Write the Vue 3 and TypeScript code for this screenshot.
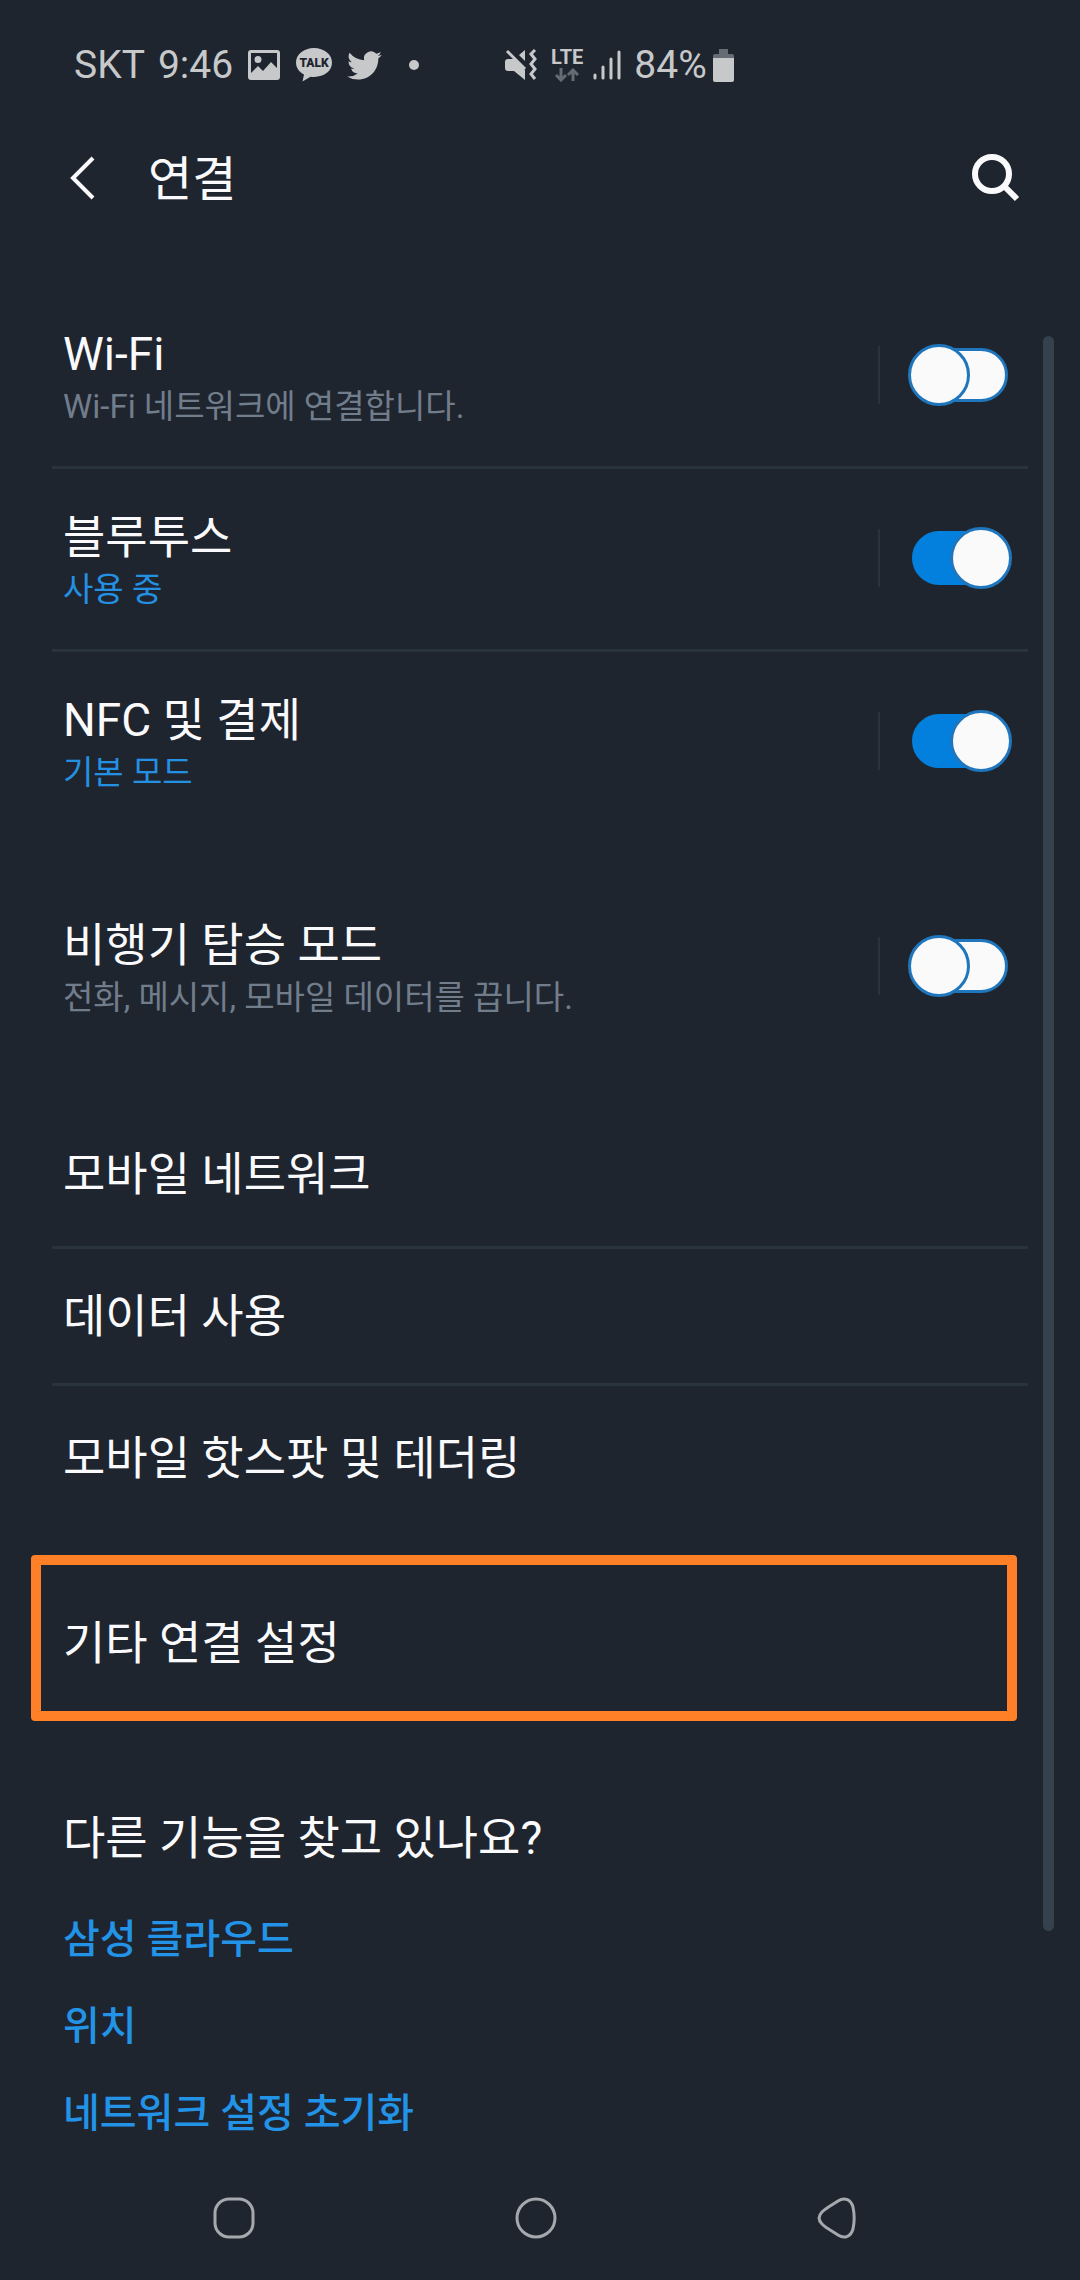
<script setup lang="ts">
import { reactive } from 'vue'

interface ToggleItem {
  id: string
  title: string
  detail: string
  on: boolean
  accent: boolean
}

const toggleGroups = reactive<ToggleItem[][]>([
  [
    { id: 'wifi', title: 'Wi-Fi', detail: 'Wi-Fi 네트워크에 연결합니다.', on: false, accent: false },
    { id: 'bluetooth', title: '블루투스', detail: '사용 중', on: true, accent: true },
    { id: 'nfc', title: 'NFC 및 결제', detail: '기본 모드', on: true, accent: true },
  ],
  [
    { id: 'airplane', title: '비행기 탑승 모드', detail: '전화, 메시지, 모바일 데이터를 끕니다.', on: false, accent: false },
  ],
])

const networkItems: string[] = ['모바일 네트워크', '데이터 사용', '모바일 핫스팟 및 테더링']
const relatedLinks: string[] = ['삼성 클라우드', '위치', '네트워크 설정 초기화']
</script>

<template>
  <div class="screen" lang="ko">
    <div class="status">
      <span class="carrier">SKT</span>
      <span class="clock">9:46</span>
      <svg class="picture" width="32" height="30" viewBox="0 0 32 30" aria-hidden="true">
        <path fill="currentColor" fill-rule="evenodd" d="M3 0H29a3 3 0 0 1 3 3V27a3 3 0 0 1-3 3H3a3 3 0 0 1-3-3V3a3 3 0 0 1 3-3ZM3 3V23L10 16L15 21L23 12L29 18V3ZM10 6a3 3 0 1 1 0 7a3 3 0 1 1 0-7Z" />
      </svg>
      <svg class="talk" width="36" height="34" viewBox="0 0 36 34" aria-hidden="true">
        <path fill="currentColor" d="M18 0C8 0 0 6.400 0 14.500C0 19.500 3 24 8 26.500L6.500 33.500L14.500 28.700C27 30.200 36 23.500 36 14.500C36 6.400 28 0 18 0Z" />
        <text x="18" y="19" text-anchor="middle" class="talk-text">TALK</text>
      </svg>
      <svg class="bird" width="35" height="29" viewBox="0 2 24 20" aria-hidden="true">
        <path fill="currentColor" d="M24 4.600a10 10 0 0 1-2.800.8 4.900 4.900 0 0 0 2.100-2.700 9.900 9.900 0 0 1-3.100 1.200 4.900 4.900 0 0 0-8.400 4.500A14 14 0 0 1 1.700 3.200a4.900 4.900 0 0 0 1.500 6.500 4.900 4.900 0 0 1-2.200-.6v.1a4.900 4.900 0 0 0 3.900 4.800 5 5 0 0 1-2.200.1 4.900 4.900 0 0 0 4.600 3.400A9.900 9.900 0 0 1 0 19.500a14 14 0 0 0 7.500 2.200c9.100 0 14-7.500 14-14v-.6A10 10 0 0 0 24 4.600Z" />
      </svg>
      <span class="dot"></span>
      <svg class="mute" width="32" height="32" viewBox="0 0 32 32" aria-hidden="true">
        <path fill="currentColor" d="M3 10H9L20 21V31L9 22H3a3 3 0 0 1-3-3V13a3 3 0 0 1 3-3ZM14 6L20 1V12Z" />
        <path fill="none" stroke="currentColor" stroke-width="3" d="M2 2L20 20M30 1L26 5L30 10L26 15L30 20L26 25L30 30" />
      </svg>
      <span class="network">
        <span class="lte">LTE</span>
        <svg width="24" height="14" viewBox="0 0 24 14" aria-hidden="true">
          <path fill="none" stroke="#666c74" stroke-width="3" d="M6 0V12M1 7L6 12L11 7M18 13V2M13 7L18 2L23 7" />
        </svg>
      </span>
      <svg class="signal" width="28" height="30" viewBox="0 0 28 30" aria-hidden="true">
        <path stroke="currentColor" stroke-width="3" stroke-linecap="round" d="M2 25V28M10 17V28M18 9V28M26 2V28" />
      </svg>
      <span class="percent">84%</span>
      <svg class="battery" width="21" height="33" viewBox="0 0 21 33" aria-hidden="true">
        <path fill="#666c74" d="M6 0H15V5H19a2 2 0 0 1 2 2V9H0V7a2 2 0 0 1 2-2H6Z" />
        <path fill="currentColor" d="M0 9H21V31a2 2 0 0 1-2 2H2a2 2 0 0 1-2-2Z" />
      </svg>
    </div>

    <header class="appbar">
      <button class="icon-button" type="button" aria-label="뒤로">
        <svg width="26" height="44" viewBox="0 0 26 44" aria-hidden="true">
          <path fill="none" stroke="currentColor" stroke-width="4" d="M24 2L4 22L24 42" />
        </svg>
      </button>
      <h1>연결</h1>
      <button class="icon-button search" type="button" aria-label="검색">
        <svg width="48" height="48" viewBox="0 0 48 48" aria-hidden="true">
          <circle cx="20" cy="20" r="17" fill="none" stroke="currentColor" stroke-width="6" />
          <path stroke="currentColor" stroke-width="6" d="M31 31L45 45" />
        </svg>
      </button>
    </header>

    <main>
      <ul v-for="(group, index) in toggleGroups" :key="index" class="group">
        <li v-for="item in group" :key="item.id" class="toggle-row">
          <label :for="item.id">
            <span class="title">{{ item.title }}</span>
            <span class="detail" :class="{ accent: item.accent }">{{ item.detail }}</span>
          </label>
          <span class="control">
            <input :id="item.id" v-model="item.on" type="checkbox" role="switch" />
          </span>
        </li>
      </ul>

      <ul class="group">
        <li v-for="name in networkItems" :key="name" class="link-row">
          <a class="title" href="#">{{ name }}</a>
        </li>
      </ul>

      <a class="title highlighted" href="#">기타 연결 설정</a>

      <section class="related">
        <h2 class="title">다른 기능을 찾고 있나요?</h2>
        <a v-for="name in relatedLinks" :key="name" href="#">{{ name }}</a>
      </section>
      <div class="scrollbar"></div>
    </main>

    <nav>
      <button class="icon-button" type="button" aria-label="최근 앱">
        <svg width="42" height="42" viewBox="0 0 42 42" aria-hidden="true">
          <rect x="2" y="2" width="38" height="38" rx="14" fill="none" stroke="currentColor" stroke-width="3" />
        </svg>
      </button>
      <button class="icon-button" type="button" aria-label="홈">
        <svg width="42" height="42" viewBox="0 0 42 42" aria-hidden="true">
          <circle cx="21" cy="21" r="19" fill="none" stroke="currentColor" stroke-width="3" />
        </svg>
      </button>
      <button class="icon-button" type="button" aria-label="뒤로 가기">
        <svg width="42" height="42" viewBox="0 0 42 42" aria-hidden="true">
          <path fill="none" stroke="currentColor" stroke-width="3" d="M22 4C29 -.5 35 3 37 10C38.500 17 38.500 25 37 32C35 39 29 42.500 22 38C16 34 10 31 6 27C2 23 2 19 6 15C10 11 16 8 22 4Z" />
        </svg>
      </button>
    </nav>
  </div>
</template>

<style>
body {
  margin: 0;
  background: #1e252f;
}
</style>

<style scoped>
.screen {
  min-height: 100vh;
  display: flex;
  flex-direction: column;
  background: #1e252f;
  color: #fafafc;
  font-family: Roboto, "Noto Sans CJK KR", sans-serif;
}

.status {
  display: flex;
  align-items: center;
  height: 130px;
  padding-left: 74px;
  box-sizing: border-box;
  color: #c7c8ca;
  font-size: 39px;
  line-height: 48px;
}
.clock { margin-left: 13px; }
.picture { margin-left: 15px; }
.talk { margin-left: 16px; }
.talk-text {
  font-size: 12px;
  font-weight: 900;
  fill: #1e252f;
}
.bird { margin-left: 15px; }
.dot {
  width: 10px;
  height: 10px;
  margin-left: 27px;
  border-radius: 50%;
  background: currentColor;
}
.mute { margin-left: 86px; }
.network {
  display: flex;
  flex-direction: column;
  align-items: center;
  gap: 3px;
  margin-left: 14px;
}
.lte {
  font-size: 20px;
  font-weight: 700;
  line-height: 16px;
}
.signal { margin-left: 10px; }
.percent { margin-left: 13px; }
.battery { margin-left: 6px; }

.icon-button {
  display: flex;
  padding: 0;
  border: 0;
  background: none;
  color: inherit;
}

.appbar {
  display: flex;
  align-items: center;
  height: 96px;
  padding: 0 60px 0 69px;
}
h1 {
  margin: 0 0 0 53px;
  padding-top: 4px;
  font-size: 48px;
  font-weight: 400;
  line-height: 60px;
}
.search { margin-left: auto; }

main {
  position: relative;
  padding-top: 60px;
}
.group {
  margin: 0 52px 45px;
  padding: 0;
  list-style: none;
}
.group:last-of-type { margin-bottom: 25px; }
.toggle-row {
  display: flex;
  align-items: center;
  min-height: 178px;
  padding: 0 20px 2px 11px;
}
.toggle-row + .toggle-row,
.link-row + .link-row {
  border-top: 3px solid #29333e;
}
label {
  flex: 1;
  display: flex;
  flex-direction: column;
  padding-top: 4px;
}
.title {
  color: #fafafc;
  font-size: 46px;
  font-weight: 400;
  line-height: 60px;
  text-decoration: none;
}
.detail {
  color: #727d8c;
  font-size: 33px;
  line-height: 46px;
}
.detail.accent { color: #2490e2; }
.control {
  display: flex;
  align-items: center;
  height: 58px;
  padding-left: 32px;
  border-left: 2px solid #29333e;
}
input {
  appearance: none;
  position: relative;
  box-sizing: border-box;
  width: 96px;
  height: 54px;
  margin: 0;
  border: 3px solid #1f76bd;
  border-radius: 27px;
  background: #fafafa;
}
input::before {
  content: "";
  position: absolute;
  top: -7px;
  left: -7px;
  box-sizing: border-box;
  width: 62px;
  height: 62px;
  border: 3px solid #1f76bd;
  border-radius: 50%;
  background: #fafafa;
}
input:checked {
  border-color: #0380dd;
  background: #0380dd;
}
input:checked::before {
  left: auto;
  right: -7px;
}

.link-row {
  display: flex;
  align-items: center;
  min-height: 134px;
  padding-left: 11px;
}
.link-row:first-child,
.link-row:last-child { min-height: 144px; }

.highlighted {
  display: block;
  margin: 0 63px 0 31px;
  padding: 48px 22px 38px;
  border: 10px solid #ff8027;
  border-radius: 4px;
}

.related {
  display: flex;
  flex-direction: column;
  align-items: flex-start;
  padding: 87px 63px 0;
}
h2 { margin: 0 0 28px; }
.related a {
  color: #2293e6;
  font-size: 40px;
  font-weight: 500;
  line-height: 87px;
  text-decoration: none;
}

.scrollbar {
  position: absolute;
  top: 110px;
  right: 26px;
  bottom: 226px;
  width: 11px;
  border-radius: 6px;
  background: #36414e;
}

nav {
  display: flex;
  justify-content: space-between;
  align-items: center;
  flex: 1;
  min-height: 120px;
  margin: 0 222px 2px 213px;
  color: #a5a8ac;
}
</style>
